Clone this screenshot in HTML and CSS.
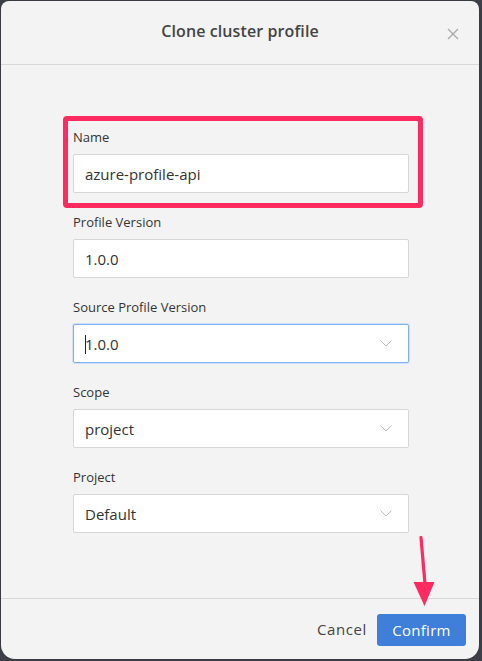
FILE: index.html
```html
<!DOCTYPE html>
<html>
<head>
<meta charset="utf-8">
<link rel="stylesheet" href="styles.css">
</head>
<body>
<div class="modal">
  <div class="header">
    <span></span>
    <h1 class="title">Clone cluster profile</h1>
    <span class="close">
      <svg width="12" height="12" viewBox="0 0 12 12"><path d="M1 1L11 11M11 1L1 11" stroke="#a8a8a8" stroke-width="1.3" fill="none"/></svg>
    </span>
  </div>
  <div class="body">
    <div class="highlight">
      <div class="field">
        <label class="label">Name</label>
        <div class="input">azure-profile-api</div>
      </div>
    </div>
    <div class="field">
      <label class="label">Profile Version</label>
      <div class="input">1.0.0</div>
    </div>
    <div class="field">
      <label class="label">Source Profile Version</label>
      <div class="input select focused"><span class="value"><span class="caret"></span>1.0.0</span><svg class="chev" width="12" height="7" viewBox="0 0 12 7"><path d="M0.5 0.5L6 6L11.5 0.5" stroke="#bdbdbd" stroke-width="1" fill="none"/></svg></div>
    </div>
    <div class="field">
      <label class="label">Scope</label>
      <div class="input select"><span class="value">project</span><svg class="chev" width="12" height="7" viewBox="0 0 12 7"><path d="M0.5 0.5L6 6L11.5 0.5" stroke="#bdbdbd" stroke-width="1" fill="none"/></svg></div>
    </div>
    <div class="field">
      <label class="label">Project</label>
      <div class="input select"><span class="value">Default</span><svg class="chev" width="12" height="7" viewBox="0 0 12 7"><path d="M0.5 0.5L6 6L11.5 0.5" stroke="#bdbdbd" stroke-width="1" fill="none"/></svg></div>
    </div>
  </div>
  <div class="footer">
    <button class="btn-cancel">Cancel</button>
    <button class="btn-confirm">Confirm</button>
  </div>
  <svg class="arrow" width="24" height="72" viewBox="0 0 24 72"><path d="M8 1.5L12 48" stroke="#ff2a5f" stroke-width="3.2" stroke-linecap="round"/><path d="M0.5 46L21.5 46L11.5 70Z" fill="#ff2a5f"/></svg>
</div>
</body>
</html>
```
FILE: styles.css
```css
html, body {
  margin: 0;
  padding: 0;
}
body {
  background: #3d4048;
  width: 482px;
  height: 661px;
  padding: 1px 3px 2px 1px;
  box-sizing: border-box;
  font-family: "Open Sans", "Liberation Sans", sans-serif;
  overflow: hidden;
}
.modal {
  position: relative;
  width: 478px;
  height: 658px;
  background: #f3f3f3;
  border-radius: 8px 8px 14px 14px;
  display: flex;
  flex-direction: column;
  box-shadow: 0 0 3px rgba(0,0,0,0.25);
}
.header {
  height: 63px;
  border-bottom: 1px solid #d8d8d8;
  display: grid;
  grid-template-columns: 1fr auto 1fr;
  align-items: center;
}
.title {
  margin: 0 0 4px;
  font-size: 16px;
  font-weight: 600;
  color: #444;
  letter-spacing: 0.1px;
}
.close {
  justify-self: end;
  margin-right: 20px;
  margin-top: 2px;
  display: flex;
}
.body {
  flex: 1;
  padding: 63px 0 0 72px;
  display: flex;
  flex-direction: column;
  gap: 20px;
}
.highlight {
  width: 336px;
  margin: -12px -14px -15px -10px;
  padding: 7px 9px 10px 5px;
  border: 5px solid #ff2a5f;
  border-radius: 4px;
}
.field {
  width: 336px;
  display: flex;
  flex-direction: column;
  gap: 8px;
}
.label {
  font-size: 13px;
  line-height: 18px;
  font-weight: 500;
  color: #333;
}
.input {
  height: 39px;
  box-sizing: border-box;
  background: #fff;
  border: 1px solid #d6d6d6;
  border-radius: 2px;
  padding: 0 11px;
  display: flex;
  align-items: center;
  justify-content: space-between;
  font-size: 15px;
  color: #333;
}
.input.focused {
  border-color: #7fb0ef;
  box-shadow: 0 0 0 1px #cfe1f8;
}
.value {
  position: relative;
}
.caret {
  position: absolute;
  left: 0;
  top: 1px;
  width: 1px;
  height: 19px;
  background: #222;
}
.chev {
  margin-right: 5px;
}
.footer {
  height: 60px;
  border-top: 1px solid #d8d8d8;
  display: flex;
  align-items: center;
  justify-content: flex-end;
  padding-right: 13px;
  gap: 10px;
}
.btn-cancel {
  border: none;
  background: none;
  font-family: inherit;
  font-size: 15px;
  letter-spacing: 0.6px;
  color: #444;
  padding: 0;
}
.btn-confirm {
  border: none;
  background: #3f7fda;
  color: #fff;
  font-family: inherit;
  font-size: 15px;
  letter-spacing: 0.3px;
  font-weight: 500;
  height: 32px;
  width: 89px;
  border-radius: 3px;
  padding: 0;
  margin-top: 1px;
}
.arrow {
  position: absolute;
  left: 412px;
  top: 535px;
}
```
